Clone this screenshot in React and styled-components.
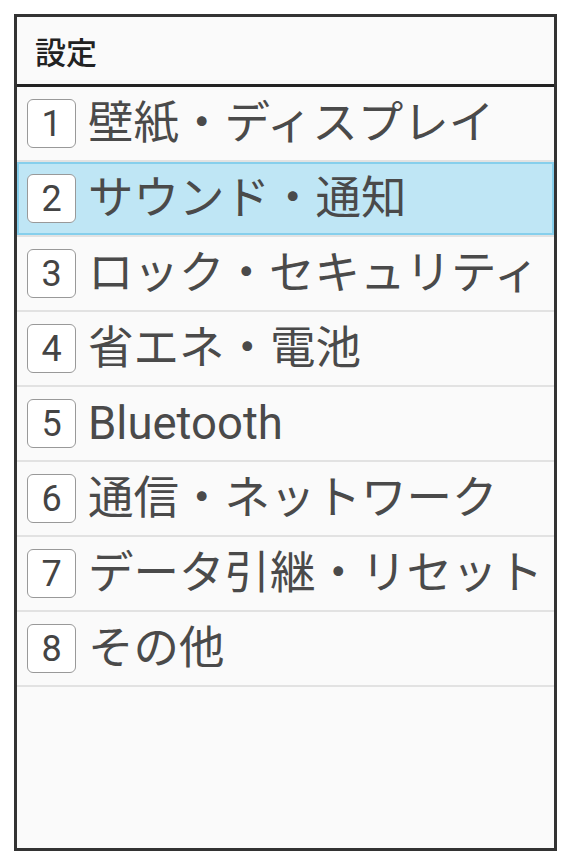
import React from 'react';
import styled, { createGlobalStyle } from 'styled-components';

const GlobalStyle = createGlobalStyle`
  html, body {
    margin: 0;
    padding: 0;
    background: #fff;
  }
`;

const SPage = styled.div`
  padding: 14px 13px 13px 14px;
`;

const SFrame = styled.div`
  box-sizing: border-box;
  width: 543px;
  height: 837px;
  border: 3px solid #333;
  background: #fafafa;
  font-family: Roboto, "Noto Sans CJK JP", sans-serif;
  display: flex;
  flex-direction: column;
`;

const SHeader = styled.header`
  height: 67px;
  display: flex;
  align-items: center;
  padding-left: 18px;
  border-bottom: 3px solid #222;
  font-family: "Noto Sans CJK JP", sans-serif;
  font-size: 31px;
  font-weight: 500;
  color: #222;
`;

const SList = styled.ul`
  list-style: none;
  margin: 0;
  padding: 0;
`;

const SRow = styled.li`
  height: 73px;
  display: flex;
  align-items: center;
  gap: 12px;
  padding-left: 10px;
  border-bottom: 2px solid #e2e2e2;
  background: ${({ $selected }) => ($selected ? '#bfe6f5' : 'transparent')};
  box-shadow: ${({ $selected }) => ($selected ? 'inset 0 0 0 2px #86cfec' : 'none')};
`;

const SKey = styled.span`
  box-sizing: border-box;
  width: 49px;
  height: 49px;
  flex: none;
  display: flex;
  align-items: center;
  justify-content: center;
  border: 1.5px solid #999;
  border-radius: 6px;
  background: #fff;
  font-family: Roboto, sans-serif;
  font-size: 36px;
  color: #444;
  line-height: 1;
`;

const SLabel = styled.span`
  font-size: 45.5px;
  color: #4a4a4a;
  white-space: nowrap;
  line-height: 1;
`;

const items = [
  '壁紙・ディスプレイ',
  'サウンド・通知',
  'ロック・セキュリティ',
  '省エネ・電池',
  'Bluetooth',
  '通信・ネットワーク',
  'データ引継・リセット',
  'その他',
];

export default function App() {
  return (
    <SPage>
      <GlobalStyle />
      <SFrame>
        <SHeader>設定</SHeader>
        <SList>
          {items.map((label, i) => (
            <SRow key={label} $selected={i === 1}>
              <SKey>{i + 1}</SKey>
              <SLabel>{label}</SLabel>
            </SRow>
          ))}
        </SList>
      </SFrame>
    </SPage>
  );
}
